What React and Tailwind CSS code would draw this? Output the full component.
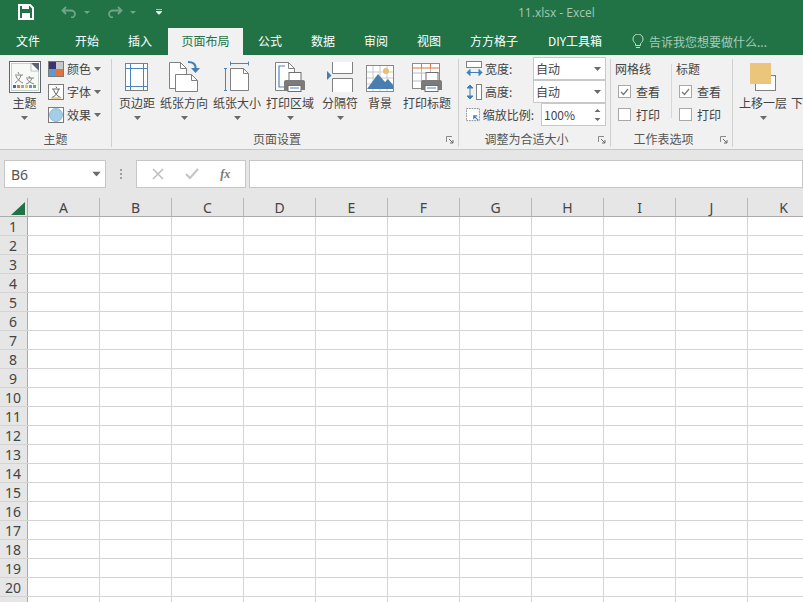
const Chev = ({ className = "" }) => (
  <svg width="7" height="4" viewBox="0 0 7 4" className={className}><path d="M0 0h7L3.500 4z" fill="#6a6a6a" /></svg>
);

const ThemeIcon = () => (
  <svg width="32" height="32" viewBox="0 0 32 32" className="translate-y-[1px]">
    <rect x=".5" y=".5" width="31" height="31" fill="#fff" stroke="#5f6470" />
    <rect x="2.500" y="2.500" width="27" height="27" fill="#f7f9f7" stroke="#c3d3c6" />
    <path d="M22 2h8v8z" fill="#5f6470" /><path d="M22 2l8 8h-8z" fill="#fff" stroke="#9a9a9a" strokeWidth=".6" />
    <path d="M9 11l1 2M6 14h8M12 14c-1 4-3 6-6 8M7 15c1 3 4 6 7 7M20 15l1 2M17 17h8M23 17c-1 3-3 5-6 6M18 18c1 2 4 4 7 5" stroke="#777" strokeWidth=".9" fill="none" />
    {["#3c6fa8", "#e07b39", "#a5a5a5", "#f0c04a", "#5b9bd5", "#70ad47"].map((c, i) => (
      <rect key={c} x={4 + i * 4} y="24" width="3" height="3" fill={c} />
    ))}
  </svg>
);

const ColorIcon = () => (
  <svg width="16" height="16" viewBox="0 0 16 16">
    <rect x=".5" y=".5" width="15" height="15" fill="#fff" stroke="#7a7a7a" />
    <rect x="1" y="1" width="7" height="7" fill="#3b3470" /><rect x="8" y="1" width="7" height="7" fill="#c9c9c9" />
    <rect x="1" y="8" width="7" height="7" fill="#5b9bd5" /><rect x="8" y="8" width="7" height="7" fill="#e0743c" />
  </svg>
);
const FontIcon = () => (
  <svg width="16" height="16" viewBox="0 0 16 16">
    <rect x=".5" y=".5" width="15" height="15" fill="#fff" stroke="#7a7a7a" />
    <path d="M8 2.500l.7 1.500M4 5h8M10.500 5c-.6 4-3 7-6.500 8.500M5.500 5.500c1 3.500 3.500 6.500 7 8" stroke="#666" strokeWidth="1" fill="none" />
    <path d="M3 14h10" stroke="#e0a23c" strokeWidth="1" />
  </svg>
);
const EffectIcon = () => (
  <svg width="16" height="16" viewBox="0 0 16 16">
    <rect x=".5" y=".5" width="15" height="15" fill="#fff" stroke="#7a7a7a" />
    <circle cx="8" cy="8" r="6.500" fill="#a4cde8" stroke="#6ea6cc" strokeWidth=".7" />
  </svg>
);

const MarginIcon = () => (
  <svg width="24" height="29" viewBox="0 0 24 29">
    <rect x=".5" y=".5" width="22" height="27" fill="#fff" stroke="#808080" />
    <path d="M5.500 1v26M18.500 1v26M1 5.500h21M1 23.500h21" stroke="#4a86bd" strokeWidth="1" />
  </svg>
);
const OrientIcon = () => (
  <svg width="31" height="31" viewBox="0 0 31 31">
    <path d="M.5 1.500h11l6 6v20H.5z" fill="#fff" stroke="#808080" />
    <path d="M11.500 1.500v6h6" fill="none" stroke="#808080" />
    <path d="M6.500 13.500h16l6 6v11h-22z" fill="#fff" stroke="#808080" />
    <path d="M22.500 13.500v6h6" fill="none" stroke="#808080" />
    <path d="M19 1c5 0 8 2 7.500 7" fill="none" stroke="#3f80b8" strokeWidth="2" />
    <path d="M22 7h9l-4.500 5z" fill="#3f80b8" />
  </svg>
);
const SizeIcon = () => (
  <svg width="26" height="31" viewBox="0 0 26 31">
    <path d="M6 2.500h19M6.500 .5v4M24.500 .5v4" stroke="#4a86bd" fill="none" />
    <path d="M1.500 8v22M0 7.500h3M0 29.500h3" stroke="#4a86bd" fill="none" />
    <path d="M6.500 7.500h13l5 5v17h-18z" fill="#fff" stroke="#808080" />
    <path d="M19.500 7.500v5h5" fill="none" stroke="#808080" />
  </svg>
);
const Printer = ({ x, y }) => (
  <g transform={`translate(${x} ${y})`}>
    <rect x="5" y="0.500" width="12" height="8" fill="#fff" stroke="#6f6f6f" />
    <path d="M0 10a2 2 0 0 1 2-2h17a2 2 0 0 1 2 2v8h-21z" fill="#7b7b7b" />
    <rect x="4" y="13.500" width="13" height="6" fill="#fff" stroke="#6f6f6f" />
    <path d="M6 16h9" stroke="#4a86bd" />
  </g>
);
const PrintAreaIcon = () => (
  <svg width="30" height="30" viewBox="0 0 30 30">
    <path d="M.5.500h13l6 6v22H.5z" fill="#fff" stroke="#808080" />
    <path d="M13.500.500v6h6" fill="none" stroke="#808080" />
    <path d="M10 4H4v21h6" fill="none" stroke="#4a86bd" strokeWidth="1.200" />
    <Printer x="9" y="10" />
  </svg>
);
const BreakIcon = () => (
  <svg width="26" height="30" viewBox="0 0 26 30">
    <path d="M5.500 0v11.500h20V0M5.500 30V16.500h20V30" fill="#fff" stroke="#808080" />
    <path d="M0 9l4.500 4.500L0 18z" fill="#3f80b8" />
  </svg>
);
const BgIcon = () => (
  <svg width="28" height="27" viewBox="0 0 28 27">
    <rect x=".5" y=".5" width="27" height="26" fill="#fff" stroke="#8a8a8a" />
    <path d="M1 7h26M1 13h26M1 19h26M7 1v25M14 1v25M21 1v25" stroke="#c9c9c9" />
    <circle cx="20" cy="6" r="3" fill="#eabd72" />
    <path d="M1 24L12 9l7 8 3-3 5 6v4z" fill="#4a7eb0" />
  </svg>
);
const PrintTitleIcon = () => (
  <svg width="30" height="29" viewBox="0 0 30 29">
    <rect x=".5" y=".5" width="27" height="25" fill="#fff" stroke="#8a8a8a" />
    <path d="M1 10h26M1 18h26M9.500 5v20M18.500 5v20" stroke="#bcbcbc" />
    <path d="M0 .5h28M0 5h28M9.500 0v5M18.500 0v5" stroke="#e0743c" />
    <Printer x="9" y="9" />
  </svg>
);

const Big = ({ w, label, icon, chev = true }) => (
  <div className={`${w} flex flex-col items-center shrink-0`}>
    <div className="h-[33px] flex items-end justify-center">{icon}</div>
    <div className="mt-[2px] whitespace-nowrap leading-[18px] h-[18px]">{label}</div>
    {chev && <Chev className="mt-[4px]" />}
  </div>
);

const Small = ({ icon, label }) => (
  <div className="flex items-center h-[23px]">
    {icon}
    <span className="ml-[3px]">{label}</span>
    <Chev className="ml-[3px]" />
  </div>
);

const Launcher = () => (
  <svg width="8" height="8" viewBox="0 0 8 8" className="absolute right-[4px] bottom-[3px]">
    <path d="M.5 6V.5H6" fill="none" stroke="#8a8a8a" />
    <path d="M3 3l4 4M7 4v3H4" fill="none" stroke="#6a6a6a" />
  </svg>
);

const Group = ({ w, label, launcher, children }) => (
  <div className={`${w} relative shrink-0 flex flex-col border-r border-[#d0d0d0] my-[3px] h-[88px]`}>
    <div className="h-[70px] flex">{children}</div>
    <div className={`absolute bottom-0 left-0 right-0 text-center text-[#555] leading-[16px] ${launcher ? "pr-[16px]" : ""}`}>{label}</div>
    {launcher && <Launcher />}
  </div>
);

const Select = ({ w, value, spin }) => (
  <div className={`${w} h-[23px] bg-white border border-[#c8c8c8] flex items-center justify-between pl-[2px] pr-[4px] text-[#444]`}>
    <span>{value}</span>
    {spin ? (
      <svg width="7" height="14" viewBox="0 0 7 14"><path d="M3.500 1l3 3h-6zM3.500 13l3-3h-6z" fill="#6a6a6a" /></svg>
    ) : <Chev />}
  </div>
);

const Check = ({ on, label }) => (
  <div className="flex items-center h-[23px] pl-[3px]">
    <div className="w-[13px] h-[13px] bg-white border border-[#a8a8a8] flex items-center justify-center">
      {on && <svg width="9" height="8" viewBox="0 0 9 8"><path d="M1 4l2.500 2.500L8 1" fill="none" stroke="#777" strokeWidth="1.200" /></svg>}
    </div>
    <span className="ml-[5px]">{label}</span>
  </div>
);

const tabs = [
  ["文件", "w-[56px]"], ["开始", "w-[50px] ml-[6px]"], ["插入", "w-[56px]"], ["页面布局", "w-[75px]", true],
  ["公式", "w-[54px]"], ["数据", "w-[52px]"], ["审阅", "w-[54px]"], ["视图", "w-[52px]"], ["方方格子", "w-[78px]"], ["DIY工具箱", "w-[84px]"],
];
const cols = ["A", "B", "C", "D", "E", "F", "G", "H", "I", "J", "K"];
const rows = Array.from({ length: 21 }, (_, i) => i + 1);

export default function App() {
  return (
    <div className="w-[803px] h-[602px] overflow-hidden bg-white text-[12px] text-[#444] font-['Noto_Sans_CJK_SC','Noto_Sans',sans-serif]">
      {/* title bar */}
      <div className="h-[28px] bg-[#217346] flex items-center relative">
        <svg width="16" height="16" viewBox="0 0 16 16" className="ml-[18px] -mt-[4px]">
          <path d="M1 1h11l3 3v11H1z" fill="none" stroke="#fff" strokeWidth="2" />
          <rect x="4" y="1" width="7" height="4" fill="#fff" /><rect x="4" y="9" width="8" height="6" fill="#fff" />
        </svg>
        <svg width="16" height="12" viewBox="0 0 16 12" className="ml-[27px] -mt-[4px]">
          <path d="M5 1L1.500 4.500 5 8M2 4.500h8a4 3.500 0 0 1 0 7" fill="none" stroke="#6fa588" strokeWidth="1.800" />
        </svg>
        <svg width="6" height="3" viewBox="0 0 6 3" className="ml-[7px] -mt-[4px]"><path d="M0 0h6L3 3z" fill="#6fa588" /></svg>
        <svg width="16" height="12" viewBox="0 0 16 12" className="ml-[17px] -mt-[4px]">
          <path d="M11 1l3.500 3.500L11 8M14 4.500H6a4 3.500 0 0 0 0 7" fill="none" stroke="#6fa588" strokeWidth="1.800" />
        </svg>
        <svg width="6" height="3" viewBox="0 0 6 3" className="ml-[7px] -mt-[4px]"><path d="M0 0h6L3 3z" fill="#6fa588" /></svg>
        <svg width="6" height="6" viewBox="0 0 6 6" className="ml-[20px] -mt-[4px]"><path d="M0 .5h6M0 2.500h6L3 5.500z" fill="#fff" stroke="#fff" strokeWidth=".6" /></svg>
        <div className="absolute left-[518px] top-[4px] text-[#a6c9b6] font-['Open_Sans',sans-serif] leading-[18px]">11.xlsx - Excel</div>
      </div>
      {/* tabs */}
      <div className="h-[27px] bg-[#217346] flex items-stretch">
        {tabs.map(([t, w, active]) => (
          <div key={t} className={`${w} shrink-0 flex items-center justify-center pb-[1px] ${active ? "bg-[#f1f1f1] text-[#217346]" : "text-white"}`}>{t}</div>
        ))}
        <div className="flex items-center ml-[15px] text-[#a9cbb8]">
          <svg width="12" height="15" viewBox="0 0 12 15">
            <path d="M3.500 9.500C1.500 8 1 6.500 1 5a5 5 0 0 1 10 0c0 1.500-.5 3-2.500 4.500v2h-5zM4 13.500h4" fill="none" stroke="#c3dccd" strokeWidth="1" />
          </svg>
          <span className="ml-[5px]">告诉我您想要做什么...</span>
        </div>
      </div>
      {/* ribbon */}
      <div className="h-[95px] bg-[#f1f1f1] border-b border-[#c6c6c6] flex items-start pt-[1px]">
        <Group w="w-[112px]" label="主题">
          <div className="pl-[8px] flex">
            <Big w="w-[33px]" label="主题" icon={<ThemeIcon />} />
            <div className="ml-[7px] -mt-[2px] flex flex-col">
              <Small icon={<ColorIcon />} label="颜色" />
              <Small icon={<FontIcon />} label="字体" />
              <Small icon={<EffectIcon />} label="效果" />
            </div>
          </div>
        </Group>
        <Group w="w-[347px]" label="页面设置" launcher>
          <div className="pl-[3px] flex">
            <Big w="w-[44px]" label="页边距" icon={<MarginIcon />} />
            <Big w="w-[50px]" label="纸张方向" icon={<OrientIcon />} />
            <Big w="w-[56px]" label="纸张大小" icon={<SizeIcon />} />
            <Big w="w-[50px]" label="打印区域" icon={<PrintAreaIcon />} />
            <Big w="w-[50px]" label="分隔符" icon={<BreakIcon />} />
            <Big w="w-[30px]" label="背景" icon={<BgIcon />} chev={false} />
            <Big w="w-[64px]" label="打印标题" icon={<PrintTitleIcon />} chev={false} />
          </div>
        </Group>
        <Group w="w-[152px]" label="调整为合适大小" launcher>
          <div className="flex -mt-[2px] pl-[7px] w-full">
            <div className="flex flex-col w-[68px] shrink-0">
              <div className="h-[23px] flex items-center">
                <svg width="17" height="16" viewBox="0 0 17 16"><rect x=".5" y=".5" width="15" height="6" fill="#fff" stroke="#808080" /><path d="M1 11.500h15M1 11.500l3-3v6zM16 11.500l-3-3v6z" fill="#3f80b8" stroke="#3f80b8" /></svg>
                <span className="ml-[2px]">宽度:</span>
              </div>
              <div className="h-[23px] flex items-center">
                <svg width="17" height="16" viewBox="0 0 17 16"><rect x="10.500" y=".5" width="5" height="15" fill="#fff" stroke="#808080" /><path d="M4 1v14M4 1L1 4h6zM4 15l-3-3h6z" fill="#3f80b8" stroke="#3f80b8" /></svg>
                <span className="ml-[2px]">高度:</span>
              </div>
              <div className="h-[23px] flex items-center whitespace-nowrap">
                <svg width="17" height="16" viewBox="0 0 17 16"><rect x=".5" y=".5" width="15" height="14" fill="#fff" stroke="#808080" strokeDasharray="2 1" /><path d="M14 14L9 9M9 13V9h4" fill="none" stroke="#3f80b8" strokeWidth="1.300" /></svg>
                <span className="ml-[2px]">缩放比例:</span>
              </div>
            </div>
            <div className="flex flex-col items-end w-[73px] -ml-[1px]">
              <Select w="w-[73px]" value="自动" />
              <Select w="w-[73px]" value="自动" />
              <Select w="w-[65px]" value="100%" spin />
            </div>
          </div>
        </Group>
        <Group w="w-[122px]" label="工作表选项" launcher>
          <div className="flex pl-[4px] -mt-[2px] text-[#444]">
            <div className="w-[56px] flex flex-col">
              <div className="h-[23px] flex items-center">网格线</div>
              <Check on label="查看" />
              <Check label="打印" />
            </div>
            <div className="w-[5px] mt-[7px] h-[54px] border-l border-[#d8d8d8]" />
            <div className="flex flex-col">
              <div className="h-[23px] flex items-center">标题</div>
              <Check on label="查看" />
              <Check label="打印" />
            </div>
          </div>
        </Group>
        <div className="flex pt-[3px] pl-[6px]">
          <Big w="w-[48px]" label="上移一层" icon={
            <svg width="26" height="29" viewBox="0 0 26 29">
              <rect x="5.500" y="12.500" width="20" height="15" fill="#fff" stroke="#808080" />
              <rect x="0" y="0" width="21" height="21" fill="#ecc57c" />
            </svg>
          } />
          <div className="ml-[4px] mt-[35px] leading-[18px] whitespace-nowrap">下</div>
        </div>
      </div>
      {/* formula bar */}
      <div className="h-[48px] bg-[#e6e6e6] flex items-start pt-[10px] pl-[4px]">
        <div className="w-[102px] h-[28px] bg-white border border-[#c6c6c6] flex items-center justify-between pl-[6px] pr-[5px] text-[14px] font-['Noto_Sans',sans-serif] text-[#555]">
          <span>B6</span><Chev className="scale-125" />
        </div>
        <div className="w-[30px] h-[28px] flex flex-col items-center justify-center gap-[2px]">
          {[0, 1, 2].map((i) => <div key={i} className="w-[2px] h-[2px] bg-[#a0a0a0]" />)}
        </div>
        <div className="w-[110px] h-[28px] bg-white border border-[#c6c6c6] flex items-center justify-around px-[4px]">
          <svg width="12" height="12" viewBox="0 0 12 12"><path d="M1 1l10 10M11 1L1 11" stroke="#bdbdbd" strokeWidth="1.500" /></svg>
          <svg width="14" height="12" viewBox="0 0 14 12"><path d="M1 6l4 4 8-9" fill="none" stroke="#c4c4c4" strokeWidth="2" /></svg>
          <span className="font-['Liberation_Serif',serif] italic font-bold text-[12px] text-[#777]">fx</span>
        </div>
        <div className="w-[554px] h-[28px] ml-[3px] bg-white border border-[#c6c6c6]" />
      </div>
      {/* grid */}
      <div className="font-['Noto_Sans',sans-serif] text-[14px] text-[#444]">
        <div className="flex h-[19px] bg-[#e6e6e6] border-b border-[#ababab]">
          <div className="w-[28px] shrink-0 flex items-end justify-end pr-[2px] pb-[1px] border-r border-[#b0b0b0]">
            <svg width="14" height="13" viewBox="0 0 14 13"><path d="M14 0v13H0z" fill="#217346" /></svg>
          </div>
          {cols.map((c) => (
            <div key={c} className="w-[72px] shrink-0 flex items-center justify-center border-r border-[#b8b8b8] leading-[18px] pt-[1px]">{c}</div>
          ))}
        </div>
        {rows.map((r) => (
          <div key={r} className="flex h-[19px] border-b border-[#d4d4d4]">
            <div className="w-[28px] shrink-0 bg-[#e6e6e6] border-r border-[#ababab] flex items-center justify-center leading-[18px] pr-[1px] pt-[2px]">{r <= 20 ? r : ""}</div>
            {cols.map((c) => <div key={c} className="w-[72px] shrink-0 border-r border-[#d4d4d4]" />)}
          </div>
        ))}
      </div>
    </div>
  );
}
